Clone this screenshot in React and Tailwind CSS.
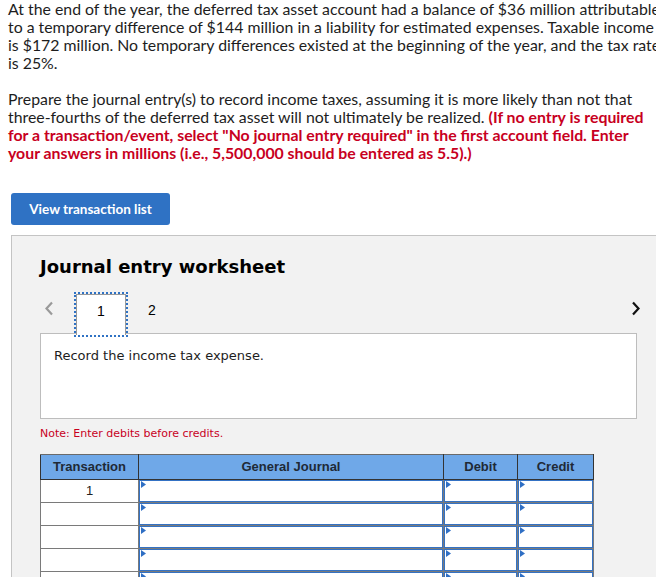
import React from "react";

const para = "font-['Lato','Liberation_Sans',sans-serif] text-[15.85px] leading-[18px] text-[#1d1d1d] whitespace-nowrap";

function InputCell() {
  return (
    <td className="p-0 border border-[#7a7a7a] bg-white">
      <div className="relative h-[22px] border border-[#3472c4] bg-white">
        <svg className="absolute left-[1px] top-[0px]" width="5" height="7" viewBox="0 0 5 7">
          <polygon points="0,0 5,3.5 0,7" fill="#2f6fc4" />
        </svg>
      </div>
    </td>
  );
}

function Row({ n }) {
  return (
    <tr className="h-[23px]">
      <td className="p-0 border border-[#7a7a7a] bg-white text-center text-[13px] font-['Liberation_Sans',Arial,sans-serif] text-[#222]">
        {n}
      </td>
      <InputCell />
      <InputCell />
      <InputCell />
    </tr>
  );
}

export default function App() {
  return (
    <div className="w-[656px] h-[577px] overflow-hidden bg-white relative">
      <div className="w-[720px] pl-[8px]">
        <p className={para}>
          At the end of the year, the deferred tax asset account had a balance of $36 million attributable
          <br />
          to a temporary difference of $144 million in a liability for estimated expenses. Taxable income
          <br />
          is $172 million. No temporary differences existed at the beginning of the year, and the tax rate
          <br />
          is 25%.
        </p>
        <p className={para + " mt-[18px]"}>
          Prepare the journal entry(s) to record income taxes, assuming it is more likely than not that
          <br />
          three-fourths of the deferred tax asset will not ultimately be realized.{" "}
          <span className="font-bold text-[#c8001e]">(If no entry is required</span>
          <br />
          <span className="font-bold text-[#c8001e]">
            for a transaction/event, select "No journal entry required" in the first account field. Enter
          </span>
          <br />
          <span className="font-bold text-[#c8001e]">
            your answers in millions (i.e., 5,500,000 should be entered as 5.5).)
          </span>
        </p>
      </div>

      <div className="ml-[11px] mt-[31px] w-[159px] h-[32px] rounded-[3px] bg-[#2f72c4] flex items-center justify-center">
        <span className="font-['Lato','Liberation_Sans',sans-serif] font-bold text-[13.5px] text-white">
          View transaction list
        </span>
      </div>

      <div className="ml-[11px] mt-[10px] w-[700px] h-[400px] bg-[#f2f2f2] border-l border-t border-[#c4c4c4] pl-[28px]">
        <h2 className="mt-[19px] font-['DejaVu_Sans',Verdana,sans-serif] font-bold text-[18px] leading-[24px] text-black">
          Journal entry worksheet
        </h2>

        <div className="relative mt-[14px] w-[597px] h-[40px]">
          <svg className="absolute left-[4px] top-[8px]" width="10" height="15" viewBox="0 0 10 15">
            <polyline points="8,1.5 2.5,7.5 8,13.5" fill="none" stroke="#9a9a9a" strokeWidth="2.2" />
          </svg>
          <div className="absolute left-[36px] top-[1px] w-[50px] h-[41px] bg-white border border-b-0 border-[#9a9a9a] outline-2 outline-dotted outline-[#2f72c4] flex items-start justify-center pt-[6px] z-10">
            <span className="font-['Liberation_Sans',Arial,sans-serif] text-[14px] text-black">1</span>
          </div>
          <span className="absolute left-[108px] top-[7px] font-['Liberation_Sans',Arial,sans-serif] text-[14px] text-black">
            2
          </span>
          <svg className="absolute left-[591px] top-[8px]" width="10" height="15" viewBox="0 0 10 15">
            <polyline points="2,1.5 7.5,7.5 2,13.5" fill="none" stroke="#111" strokeWidth="2.2" />
          </svg>
        </div>

        <div className="w-[597px] h-[86px] bg-white border border-[#bdbdbd] pl-[13px] pt-[13px]">
          <p className="font-['DejaVu_Sans',Verdana,sans-serif] text-[13px] leading-[18px] text-[#1d1d1d]">
            Record the income tax expense.
          </p>
        </div>

        <p className="mt-[7px] font-['DejaVu_Sans',Verdana,sans-serif] text-[11px] leading-[16px] text-[#c8001e]">
          Note: Enter debits before credits.
        </p>

        <table className="mt-[12px] border-collapse table-fixed w-[553px]">
          <colgroup>
            <col className="w-[98px]" />
            <col className="w-[305px]" />
            <col className="w-[74px]" />
            <col className="w-[76px]" />
          </colgroup>
          <thead>
            <tr className="h-[25px] bg-[#6fa8e8]">
              {["Transaction", "General Journal", "Debit", "Credit"].map((h) => (
                <th
                  key={h}
                  className="p-0 border border-[#333] border-t-[#6a6a6a] text-center font-['Liberation_Sans',Arial,sans-serif] font-bold text-[13px] text-[#1f2a36]"
                >
                  {h}
                </th>
              ))}
            </tr>
          </thead>
          <tbody>
            <Row n="1" />
            <Row n="" />
            <Row n="" />
            <Row n="" />
            <Row n="" />
          </tbody>
        </table>
      </div>
    </div>
  );
}
